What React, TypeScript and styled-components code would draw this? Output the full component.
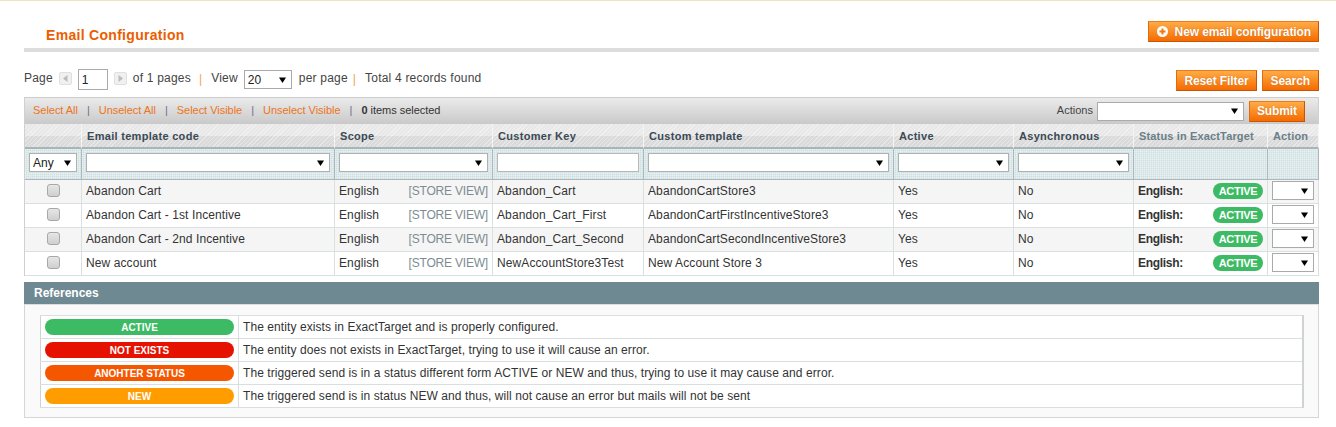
import styled, { createGlobalStyle } from "styled-components";

const arrow =
  "url(\"data:image/svg+xml;utf8,<svg xmlns='http://www.w3.org/2000/svg' width='7' height='6'><path d='M0 0.5h7L3.5 6z' fill='black'/></svg>\")";

const rows = [
  { code: "Abandon Cart", key: "Abandon_Cart", custom: "AbandonCartStore3" },
  { code: "Abandon Cart - 1st Incentive", key: "Abandon_Cart_First", custom: "AbandonCartFirstIncentiveStore3" },
  { code: "Abandon Cart - 2nd Incentive", key: "Abandon_Cart_Second", custom: "AbandonCartSecondIncentiveStore3" },
  { code: "New account", key: "NewAccountStore3Test", custom: "New Account Store 3" },
];

const references = [
  { label: "ACTIVE", color: "#3cba64", text: "The entity exists in ExactTarget and is properly configured." },
  { label: "NOT EXISTS", color: "#e61200", text: "The entity does not exists in ExactTarget, trying to use it will cause an error." },
  { label: "ANOHTER STATUS", color: "#f55600", text: "The triggered send is in a status different form ACTIVE or NEW and thus, trying to use it may cause and error." },
  { label: "NEW", color: "#ff9c00", text: "The triggered send is in status NEW and thus, will not cause an error but mails will not be sent" },
];

const App: React.FC = () => {
  return (
    <Page>
      <GlobalStyle />
      <TitleBar>
        <Title>Email Configuration</Title>
        <OrangeButton>
          <svg width="13" height="13" viewBox="0 0 13 13">
            <circle cx="6.5" cy="6.5" r="5.5" fill="#fff" />
            <path d="M3.5 6.5h6M6.5 3.5v6" stroke="#f07a10" strokeWidth="2" />
          </svg>
          New email configuration
        </OrangeButton>
      </TitleBar>

      <PagerRow>
        <Pager>
          <span>Page</span>
          <PageArrow>
            <svg width="5" height="7" viewBox="0 0 5 7"><path d="M4.5 0v7L0 3.5z" fill="#bbb" /></svg>
          </PageArrow>
          <PageInput defaultValue="1" />
          <PageArrow>
            <svg width="5" height="7" viewBox="0 0 5 7"><path d="M0.5 0v7L5 3.5z" fill="#bbb" /></svg>
          </PageArrow>
          <span>of 1 pages</span>
          <PagerSep $before={8}>|</PagerSep>
          <span>View</span>
          <ViewSelect defaultValue="20">
            <option>20</option>
          </ViewSelect>
          <span>per page</span>
          <PagerSep $before={5}>|</PagerSep>
          <span>Total 4 records found</span>
        </Pager>
        <PagerButtons>
          <OrangeButton>Reset Filter</OrangeButton>
          <SearchButton>Search</SearchButton>
        </PagerButtons>
      </PagerRow>

      <GridBox>
        <MassActions>
          <MassLinks>
            <MassLink>Select All</MassLink>
            <MassSep>|</MassSep>
            <MassLink>Unselect All</MassLink>
            <MassSep>|</MassSep>
            <MassLink>Select Visible</MassLink>
            <MassSep>|</MassSep>
            <MassLink>Unselect Visible</MassLink>
            <MassSep>|</MassSep>
            <span><b>0</b> items selected</span>
          </MassLinks>
          <MassSubmit>
            <MassLabel>Actions</MassLabel>
            <ActionsSelect />
            <OrangeButton>Submit</OrangeButton>
          </MassSubmit>
        </MassActions>

        <Grid>
          <colgroup>
            <col width="57" />
            <col width="253" />
            <col width="158" />
            <col width="151" />
            <col width="250" />
            <col width="120" />
            <col width="120" />
            <col width="134" />
            <col width="51" />
          </colgroup>
          <thead>
            <HeadRow>
              <HeadCell />
              <HeadCell>Email template code</HeadCell>
              <HeadCell>Scope</HeadCell>
              <HeadCell>Customer Key</HeadCell>
              <HeadCell>Custom template</HeadCell>
              <HeadCell>Active</HeadCell>
              <HeadCell>Asynchronous</HeadCell>
              <HeadCell $muted>Status in ExactTarget</HeadCell>
              <HeadCell $muted>Action</HeadCell>
            </HeadRow>
            <tr>
              <FilterCell><FilterSelect defaultValue="Any"><option>Any</option></FilterSelect></FilterCell>
              <FilterCell><FilterSelect /></FilterCell>
              <FilterCell><FilterSelect /></FilterCell>
              <FilterCell><FilterInput /></FilterCell>
              <FilterCell><FilterSelect /></FilterCell>
              <FilterCell><FilterSelect /></FilterCell>
              <FilterCell><FilterSelect /></FilterCell>
              <FilterCell />
              <FilterCell />
            </tr>
          </thead>
          <tbody>
            {rows.map((row) => (
              <BodyRow key={row.code}>
                <CheckCell><RowCheck type="checkbox" /></CheckCell>
                <Cell>{row.code}</Cell>
                <Cell>
                  <ScopeLine>
                    <span>English</span>
                    <StoreView>[STORE VIEW]</StoreView>
                  </ScopeLine>
                </Cell>
                <Cell>{row.key}</Cell>
                <Cell>{row.custom}</Cell>
                <Cell>Yes</Cell>
                <Cell>No</Cell>
                <Cell>
                  <StatusLine>
                    <StatusLang>English:</StatusLang>
                    <ActivePill>ACTIVE</ActivePill>
                  </StatusLine>
                </Cell>
                <ActionCell><ActionSelect /></ActionCell>
              </BodyRow>
            ))}
          </tbody>
        </Grid>
      </GridBox>

      <RefHeader>References</RefHeader>
      <RefBody>
        <RefTable>
          <tbody>
            {references.map((ref) => (
              <tr key={ref.label}>
                <RefPillCell>
                  <RefPill $color={ref.color}>{ref.label}</RefPill>
                </RefPillCell>
                <RefTextCell>{ref.text}</RefTextCell>
              </tr>
            ))}
          </tbody>
        </RefTable>
      </RefBody>
    </Page>
  );
};

const GlobalStyle = createGlobalStyle`
  html, body {
    margin: 0;
    padding: 0;
    background: #fff;
  }
  body {
    font: 12px "Liberation Sans", Arial, sans-serif;
    color: #2f2f2f;
  }
`;

const Page = styled.div`
  box-sizing: border-box;
  width: 1336px;
  height: 427px;
  overflow: hidden;
  border-top: 1px solid #f0e3c0;
  padding: 0 17px 0 24px;
`;

const TitleBar = styled.div`
  box-sizing: border-box;
  height: 51px;
  display: flex;
  align-items: flex-start;
  justify-content: space-between;
  border-bottom: 4px solid #dddddd;
  padding: 20px 0 0 22px;
`;

const Title = styled.h3`
  margin: 6px 0 0;
  font-size: 14px;
  line-height: 17px;
  font-weight: bold;
  letter-spacing: 0.3px;
  color: #eb5e00;
`;

const OrangeButton = styled.button`
  box-sizing: border-box;
  height: 21px;
  display: inline-flex;
  align-items: center;
  gap: 6px;
  padding: 0 7px;
  border: 1px solid #c8540a;
  border-top-color: #ee7a18;
  border-left-color: #e06a10;
  background: linear-gradient(#ffac47, #f56b00);
  color: #fff;
  font: bold 12px "Liberation Sans", Arial, sans-serif;
  letter-spacing: -0.1px;
  text-shadow: 0 0 1px rgba(160, 70, 0, 0.6);
  white-space: nowrap;
`;

const SearchButton = styled(OrangeButton)`
  padding: 0 8px;
`;

const PagerRow = styled.div`
  display: flex;
  justify-content: space-between;
  align-items: flex-start;
  margin-top: 18px;
  height: 27px;
`;

const Pager = styled.div`
  display: flex;
  align-items: center;
  height: 16px;
  color: #444;
  letter-spacing: 0.2px;
  > span { white-space: nowrap; }
`;

const PageArrow = styled.span`
  box-sizing: border-box;
  width: 13px;
  height: 13px;
  margin: 1px 6px 0;
  display: inline-flex;
  align-items: center;
  justify-content: center;
  background: #f0f0f0;
  border: 1px solid #e0e0e0;
  border-radius: 2px;
`;

const PageInput = styled.input`
  box-sizing: border-box;
  width: 30px;
  height: 21px;
  margin: 3px 0 0;
  padding: 2px 3px;
  border: 1px solid #aaa;
  font: 12px "Liberation Sans", Arial, sans-serif;
  color: #222;
  outline: none;
`;

const PagerSep = styled.span<{ $before: number }>`
  color: #eda650;
  margin: 1px 9px 0 ${(p) => p.$before}px;
`;

const BaseSelect = styled.select`
  appearance: none;
  box-sizing: border-box;
  background: #fff ${arrow} no-repeat right 5px center;
  border: 1px solid #aaa;
  border-radius: 0;
  padding: 0 3px;
  font: 12px "Liberation Sans", Arial, sans-serif;
  color: #222;
  outline: none;
`;

const ViewSelect = styled(BaseSelect)`
  width: 48px;
  height: 19px;
  margin: 3px 7px 0 6px;
`;

const PagerButtons = styled.div`
  display: flex;
  gap: 5px;
`;

const GridBox = styled.div`
  border-left: 1px solid #cfd1d1;
  border-right: 1px solid #cfd1d1;
`;

const MassActions = styled.div`
  box-sizing: border-box;
  height: 27px;
  display: flex;
  justify-content: space-between;
  align-items: center;
  padding: 0 13px 0 8px;
  border-top: 1px solid #cccccc;
  background: linear-gradient(#ebebeb, #c9c9c9);
`;

const MassLinks = styled.div`
  display: flex;
  align-items: center;
  margin-bottom: 2px;
  font-size: 11px;
  letter-spacing: -0.03px;
  color: #333;
`;

const MassLink = styled.a`
  color: #ed7420;
`;

const MassSep = styled.span`
  color: #6f6a8a;
  margin: 0 9px;
`;

const MassSubmit = styled.div`
  display: flex;
  align-items: center;
`;

const MassLabel = styled.span`
  font-size: 11px;
  color: #444;
  margin: 0 4px 2px 0;
`;

const ActionsSelect = styled(BaseSelect)`
  width: 147px;
  height: 19px;
  margin-right: 5px;
`;

const Grid = styled.table`
  table-layout: fixed;
  width: 1294px;
  border-collapse: separate;
  border-spacing: 0;
`;

const HeadRow = styled.tr`
  height: 25px;
`;

const HeadCell = styled.th<{ $muted?: boolean }>`
  box-sizing: border-box;
  padding: 0 5px;
  height: 25px;
  text-align: left;
  font-size: 11px;
  font-weight: bold;
  letter-spacing: ${(p) => (p.$muted ? "0.15px" : "0.3px")};
  white-space: nowrap;
  color: ${(p) => (p.$muted ? "#6b7f88" : "#3b4a55")};
  border-right: 1px solid #f5f5f5;
  border-bottom: 2px solid #a9b4b8;
  background:
    repeating-linear-gradient(135deg, rgba(255, 255, 255, 0.35) 0 1px, transparent 1px 3px),
    linear-gradient(#e8e8e8 0 50%, #dadada 50% 100%);
`;

const FilterCell = styled.th`
  box-sizing: border-box;
  height: 31px;
  padding: 4px 4px 0;
  vertical-align: top;
  text-align: left;
  font-weight: normal;
  border-right: 1px solid #aeb8bb;
  border-bottom: 1px solid #aeb8bb;
  background-color: #cfe0e3;
  background-image:
    linear-gradient(rgba(255, 255, 255, 0.3) 1px, transparent 1px),
    linear-gradient(90deg, rgba(255, 255, 255, 0.3) 1px, transparent 1px);
  background-size: 2px 2px;
`;

const FilterSelect = styled(BaseSelect)`
  display: block;
  width: 100%;
  height: 19px;
  border-color: #b0b0b0;
`;

const FilterInput = styled.input`
  display: block;
  box-sizing: border-box;
  width: 100%;
  height: 19px;
  border: 1px solid #b8b8b8;
  background: #fff;
  outline: none;
`;

const BodyRow = styled.tr`
  height: 24px;
  &:nth-child(odd) td { background: #f5f5f5; }
`;

const Cell = styled.td`
  box-sizing: border-box;
  height: 24px;
  padding: 0 4px 2px;
  font-size: 12px;
  letter-spacing: 0.1px;
  color: #333;
  white-space: nowrap;
  overflow: hidden;
  border-right: 1px solid #dadfe0;
  border-bottom: 1px solid #dadfe0;
  background: #fff;
`;

const CheckCell = styled(Cell)`
  text-align: center;
  padding: 0 0 2px;
`;

const RowCheck = styled.input`
  appearance: none;
  display: block;
  box-sizing: border-box;
  width: 13px;
  height: 13px;
  margin: 0 auto 0 22px;
  border: 1px solid #a8a8a8;
  border-radius: 3px;
  background: linear-gradient(#e6e6e6, #cfcfcf);
`;

const ScopeLine = styled.div`
  display: flex;
  justify-content: space-between;
`;

const StoreView = styled.span`
  color: #7d8c92;
  letter-spacing: -0.2px;
`;

const StatusLine = styled.div`
  display: flex;
  align-items: center;
  justify-content: space-between;
`;

const StatusLang = styled.b`
  letter-spacing: -0.3px;
`;

const ActivePill = styled.span`
  width: 50px;
  height: 16px;
  border-radius: 8px;
  background: #3cba64;
  color: #fff;
  font-size: 11px;
  font-weight: bold;
  letter-spacing: -0.3px;
  line-height: 17px;
  text-align: center;
`;

const ActionCell = styled(Cell)`
  padding: 0 4px 2px;
`;

const ActionSelect = styled(BaseSelect)`
  display: block;
  width: 42px;
  height: 19px;
`;

const RefHeader = styled.div`
  box-sizing: border-box;
  margin-top: 6px;
  height: 22px;
  padding-left: 10px;
  background: #6f8992;
  color: #fff;
  font-size: 12px;
  font-weight: bold;
  line-height: 22px;
`;

const RefBody = styled.div`
  box-sizing: border-box;
  height: 114px;
  padding: 10px 15px 0;
  background: #fafafa;
  border: 1px solid #d6d6d6;
  border-top-color: #dddddd;
`;

const RefTable = styled.table`
  table-layout: fixed;
  width: 1264px;
  border-collapse: collapse;
  background: #fff;
  border: 1px solid #cfd3d3;
  border-right-width: 2px;
`;

const RefPillCell = styled.td`
  box-sizing: border-box;
  width: 198px;
  height: 23px;
  padding: 0 4px;
  border: 1px solid #d9dfdf;
  border-left: none;
`;

const RefTextCell = styled.td`
  box-sizing: border-box;
  padding: 0 4px;
  border: 1px solid #d9dfdf;
  border-right: none;
  font-size: 12px;
  letter-spacing: 0.08px;
  color: #333;
`;

const RefPill = styled.div<{ $color: string }>`
  height: 16px;
  border-radius: 8px;
  background: ${(p) => p.$color};
  color: #fff;
  font-size: 10px;
  font-weight: bold;
  line-height: 17px;
  text-align: center;
`;

export default App;
